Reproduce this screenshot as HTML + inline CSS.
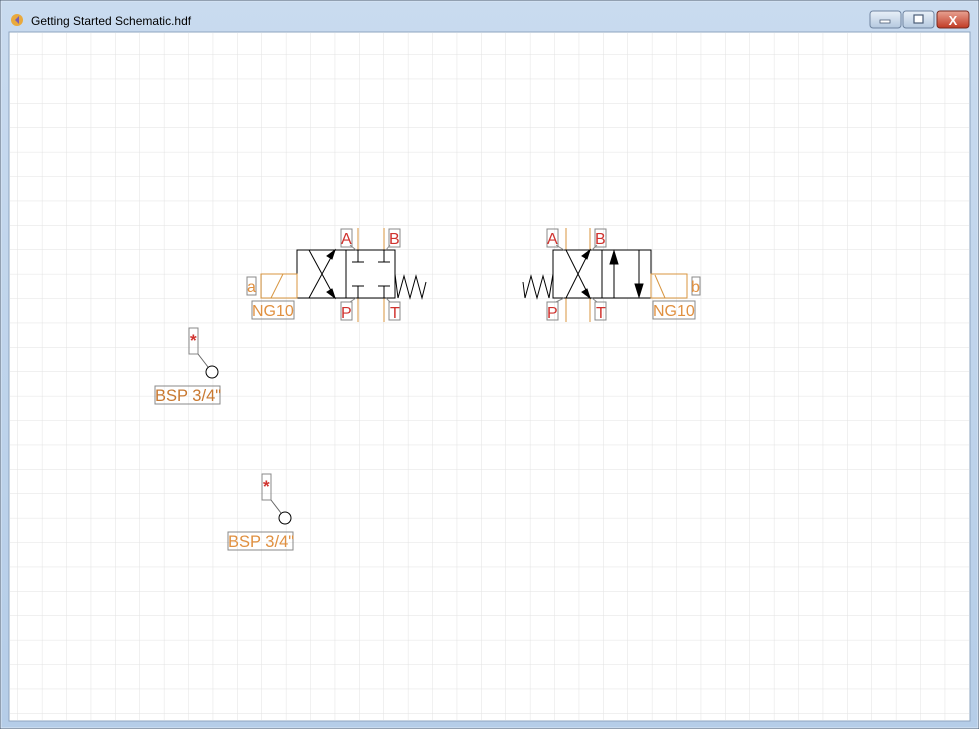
<!DOCTYPE html>
<html><head><meta charset="utf-8"><style>
html,body{margin:0;padding:0;width:979px;height:729px;overflow:hidden;background:#b9d1ea;font-family:"Liberation Sans",sans-serif}
</style></head><body>
<svg width="979" height="729" xmlns="http://www.w3.org/2000/svg" style="position:absolute;left:0;top:0">
<defs>
<linearGradient id="tb" x1="0" y1="0" x2="0" y2="1"><stop offset="0" stop-color="#c9dbef"/><stop offset="1" stop-color="#b5cde8"/></linearGradient>
<linearGradient id="bt" x1="0" y1="0" x2="0" y2="1"><stop offset="0" stop-color="#e9f0f8"/><stop offset="1" stop-color="#b4c8df"/></linearGradient>
<linearGradient id="cl" x1="0" y1="0" x2="0" y2="1"><stop offset="0" stop-color="#e8a393"/><stop offset="1" stop-color="#c13a24"/></linearGradient>
<pattern id="g" x="18" y="6" width="24.4" height="24.4" patternUnits="userSpaceOnUse"><path d="M24.4 0V24.4M0 24.4H24.4" stroke="#e2e2e2" stroke-width="1" fill="none"/></pattern>
</defs>
<rect x="0" y="0" width="979" height="729" fill="url(#tb)" stroke="#4a5a6e" stroke-width="1"/>
<rect x="1" y="1" width="977" height="727" fill="none" stroke="#dbe7f4"/>
<rect x="9" y="32" width="961" height="689" fill="#fff" stroke="#8ea4bf"/>
<rect x="10" y="33" width="959" height="687" fill="url(#g)"/>
<circle cx="17" cy="20" r="6" fill="#e9a93c"/><path d="M19 16 L15 20 L19 24" fill="#7c5fb0"/>
<text x="31" y="25" font-size="12" fill="#000">Getting Started Schematic.hdf</text>
<rect x="870" y="11" width="31" height="17" rx="3" fill="url(#bt)" stroke="#6f84a0"/>
<rect x="880" y="20" width="10" height="3" fill="#fff" stroke="#4b5d77" stroke-width=".8"/>
<rect x="903" y="11" width="31" height="17" rx="3" fill="url(#bt)" stroke="#6f84a0"/>
<rect x="914" y="15" width="9" height="8" fill="#fff" stroke="#4b5d77" stroke-width="1.2"/>
<rect x="937" y="11" width="32" height="17" rx="3" fill="url(#cl)" stroke="#7a2a1e"/>
<text x="953" y="25" font-size="13" font-weight="bold" fill="#fff" text-anchor="middle">X</text>

<g stroke-width="1" fill="none">
<line x1="358" y1="228" x2="358" y2="322" stroke="#d8953f"/>
<line x1="384" y1="228" x2="384" y2="322" stroke="#d8953f"/>
<rect x="297" y="250" width="98" height="48" fill="#fff" stroke="#000"/>
<line x1="346" y1="250" x2="346" y2="298" stroke="#000"/>
<line x1="358" y1="250" x2="358" y2="262" stroke="#000"/><line x1="352" y1="262" x2="364" y2="262" stroke="#000"/>
<line x1="384" y1="250" x2="384" y2="262" stroke="#000"/><line x1="378" y1="262" x2="390" y2="262" stroke="#000"/>
<line x1="358" y1="298" x2="358" y2="286" stroke="#000"/><line x1="352" y1="286" x2="364" y2="286" stroke="#000"/>
<line x1="384" y1="298" x2="384" y2="286" stroke="#000"/><line x1="378" y1="286" x2="390" y2="286" stroke="#000"/>
<line x1="309" y1="250" x2="335" y2="298" stroke="#000"/>
<line x1="309" y1="298" x2="335" y2="250" stroke="#000"/>
<path d="M335 250 L327 256 L332 259Z" fill="#000" stroke="#000"/>
<path d="M335 298 L327 292 L332 289Z" fill="#000" stroke="#000"/>
<path d="M395 274 L398 298 L404 276 L410 298 L416 276 L422 298 L426 282" stroke="#000"/>
<rect x="261" y="274" width="36" height="24" stroke="#d8953f"/>
<line x1="271" y1="298" x2="283" y2="274" stroke="#d8953f"/>
<rect x="247" y="277" width="9" height="18" stroke="#888"/>
<rect x="252" y="301" width="42" height="18" stroke="#888"/>
<rect x="341" y="229" width="11" height="18" stroke="#888"/>
<rect x="389" y="229" width="11" height="18" stroke="#888"/>
<rect x="341" y="302" width="11" height="18" stroke="#888"/>
<rect x="389" y="302" width="11" height="18" stroke="#888"/>
<line x1="350" y1="245" x2="356" y2="250" stroke="#888"/>
<line x1="390" y1="245" x2="386" y2="250" stroke="#888"/>
<line x1="350" y1="302" x2="356" y2="298" stroke="#888"/>
<line x1="390" y1="302" x2="386" y2="298" stroke="#888"/>

<line x1="566" y1="228" x2="566" y2="322" stroke="#d8953f"/>
<line x1="590" y1="228" x2="590" y2="322" stroke="#d8953f"/>
<rect x="553" y="250" width="98" height="48" fill="#fff" stroke="#000"/>
<line x1="602" y1="250" x2="602" y2="298" stroke="#000"/>
<line x1="566" y1="250" x2="590" y2="298" stroke="#000"/>
<line x1="566" y1="298" x2="590" y2="250" stroke="#000"/>
<path d="M590 250 L582 256 L587 259Z" fill="#000" stroke="#000"/>
<path d="M590 298 L582 292 L587 289Z" fill="#000" stroke="#000"/>
<line x1="614" y1="298" x2="614" y2="252" stroke="#000"/><path d="M614 251 L610 264 L618 264Z" fill="#000" stroke="#000"/>
<line x1="639" y1="250" x2="639" y2="296" stroke="#000"/><path d="M639 297 L635 284 L643 284Z" fill="#000" stroke="#000"/>
<path d="M553 274 L549 298 L543 276 L537 298 L531 276 L525 298 L523 282" stroke="#000"/>
<rect x="651" y="274" width="36" height="24" stroke="#d8953f"/>
<line x1="665" y1="298" x2="655" y2="275" stroke="#d8953f"/>
<rect x="692" y="277" width="8" height="18" stroke="#888"/>
<rect x="653" y="301" width="42" height="18" stroke="#888"/>
<rect x="547" y="229" width="11" height="18" stroke="#888"/>
<rect x="595" y="229" width="11" height="18" stroke="#888"/>
<rect x="547" y="302" width="11" height="18" stroke="#888"/>
<rect x="595" y="302" width="11" height="18" stroke="#888"/>
<line x1="556" y1="245" x2="564" y2="250" stroke="#888"/>
<line x1="597" y1="245" x2="592" y2="250" stroke="#888"/>
<line x1="556" y1="302" x2="564" y2="298" stroke="#888"/>
<line x1="597" y1="302" x2="592" y2="298" stroke="#888"/>

<rect x="189" y="328" width="9" height="26" stroke="#888"/>
<line x1="198" y1="354" x2="208" y2="367" stroke="#666"/>
<circle cx="212" cy="372" r="6" stroke="#000" fill="#fff"/>
<rect x="155" y="386" width="65" height="18" stroke="#888"/>
<rect x="262" y="474" width="9" height="26" stroke="#888"/>
<line x1="271" y1="500" x2="281" y2="513" stroke="#666"/>
<circle cx="285" cy="518" r="6" stroke="#000" fill="#fff"/>
<rect x="228" y="532" width="65" height="18" stroke="#888"/>
</g>
<g font-size="16" fill="#d0322e">
<text x="341" y="244">A</text><text x="389" y="244">B</text><text x="341" y="318">P</text><text x="390" y="318">T</text>
<text x="547" y="244">A</text><text x="595" y="244">B</text><text x="547" y="318">P</text><text x="596" y="318">T</text>
</g>
<g font-size="16" fill="#e09040">
<text x="247" y="292">a</text><text x="691" y="292">b</text>
<text x="252" y="316">NG10</text><text x="653" y="316">NG10</text>
</g>
<text x="155" y="401" font-size="16.5" fill="#c87830">BSP 3/4"</text>
<text x="228" y="547" font-size="16.5" fill="#e09040">BSP 3/4"</text>
<text x="190" y="346" font-size="17" font-weight="bold" fill="#d0322e">*</text>
<text x="263" y="492" font-size="17" font-weight="bold" fill="#d0322e">*</text>
</svg>
</body></html>
